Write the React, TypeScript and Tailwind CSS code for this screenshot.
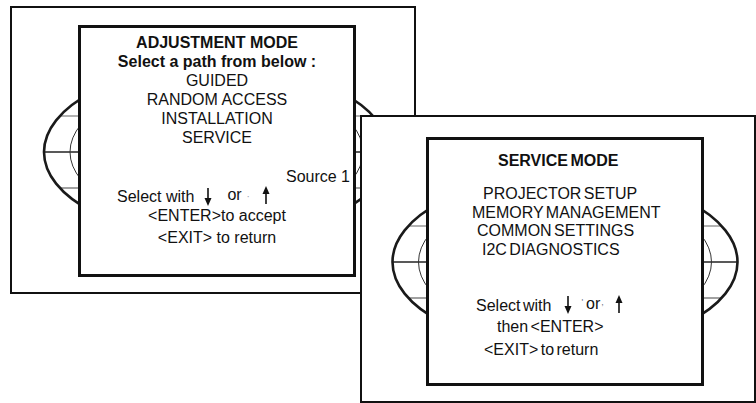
import React from "react";

function Arrow({ dir }: { dir: "up" | "down" }) {
  return (
    <svg width="10" height="18" viewBox="0 0 10 18" className="shrink-0">
      {dir === "down" ? (
        <>
          <line x1="5" y1="0" x2="5" y2="11" stroke="#111" strokeWidth="1.6" />
          <polygon points="1.5,10 8.5,10 5,18" fill="#111" />
        </>
      ) : (
        <>
          <polygon points="1.5,8 8.5,8 5,0" fill="#111" />
          <line x1="5" y1="7" x2="5" y2="18" stroke="#111" strokeWidth="1.6" />
        </>
      )}
    </svg>
  );
}

function Globe({ id, cx, cy }: { id: string; cx: number; cy: number }) {
  return (
    <svg className="absolute left-0 top-0" width="410" height="290" aria-hidden>
      <defs>
        <clipPath id={id}>
          <ellipse cx={cx} cy={cy} rx="172.5" ry="86" />
        </clipPath>
      </defs>
      <g clipPath={`url(#${id})`}>
        <line x1="0" x2="410" y1={cy - 36} y2={cy - 36} stroke="#666" strokeWidth="1.2" />
        <line x1="0" x2="410" y1={cy} y2={cy} stroke="#222" strokeWidth="1.6" />
        <line x1="0" x2="410" y1={cy + 36} y2={cy + 36} stroke="#444" strokeWidth="1.2" />
      </g>
      <ellipse cx={cx} cy={cy} rx="146.5" ry="72.5" fill="none" stroke="#333" strokeWidth="1" />
      <ellipse cx={cx} cy={cy} rx="172.5" ry="86" fill="none" stroke="#1a1a1a" strokeWidth="2.6" />
    </svg>
  );
}

export default function App() {
  return (
    <div className="relative h-[403px] w-[756px] overflow-hidden bg-white font-['Liberation_Sans',Arial,sans-serif] text-[16px] text-[#111]">
      {/* Adjustment mode screen */}
      <div className="absolute left-[10px] top-[6px] h-[288px] w-[406px] border-2 border-[#111] bg-white">
        <Globe id="g1" cx={204.5} cy={144} />
        <div className="relative ml-[66px] mt-[17px] flex h-[252px] w-[278px] flex-col border-[3px] border-[#111] bg-white pt-[5px] leading-[19px]">
          <div className="text-center font-bold">ADJUSTMENT MODE</div>
          <div className="text-center font-bold">Select a path from below :</div>
          <div className="text-center">GUIDED</div>
          <div className="text-center">RANDOM ACCESS</div>
          <div className="text-center">INSTALLATION</div>
          <div className="text-center">SERVICE</div>
          <div className="mt-[20px] pr-[3px] text-right">Source 1</div>
          <div className="mt-[1px] flex h-[19px] items-center pl-[36px]">
            <span>Select with</span>
            <span className="ml-[9px]"><Arrow dir="down" /></span>
            <span className="mb-[4px] ml-[14px]">or</span>
            <span className="ml-[5px] text-[10px] text-gray-400">·</span>
            <span className="mb-[3px] ml-[11px]"><Arrow dir="up" /></span>
          </div>
          <div className="text-center">&lt;ENTER&gt;to accept</div>
          <div className="mt-[3px] text-center">&lt;EXIT&gt; to return</div>
        </div>
      </div>

      {/* Service mode screen */}
      <div className="absolute left-[360px] top-[115px] h-[288px] w-[396px] border-2 border-[#111] bg-white">
        <Globe id="g2" cx={203} cy={145} />
        <div className="relative ml-[64px] mt-[20px] flex h-[249px] w-[278px] flex-col border-[3px] border-[#111] bg-white pt-[11px] leading-[19px] [word-spacing:-2px]">
          <div className="pl-[69px] font-bold">SERVICE MODE</div>
          <div className="mt-[15px] flex flex-col leading-[18.7px]">
            <div className="pl-[54px]">PROJECTOR SETUP</div>
            <div className="pl-[43px]">MEMORY MANAGEMENT</div>
            <div className="pl-[48px]">COMMON SETTINGS</div>
            <div className="pl-[53px]">I2C DIAGNOSTICS</div>
          </div>
          <div className="mt-[36px] flex h-[19px] items-center pl-[47px]">
            <span>Select with</span>
            <span className="ml-[12px]"><Arrow dir="down" /></span>
            <span className="mb-[6px] ml-[8px] text-[9px] text-gray-500">'</span>
            <span className="mb-[3px] ml-[3px]">or</span>
            <span className="mb-[6px] ml-[1px] text-[9px] text-gray-500">,</span>
            <span className="mb-[3px] ml-[10px]"><Arrow dir="up" /></span>
          </div>
          <div className="mt-[2px] pl-[68px]">then &lt;ENTER&gt;</div>
          <div className="mt-[4px] pl-[55px]">&lt;EXIT&gt; to return</div>
        </div>
      </div>
    </div>
  );
}
